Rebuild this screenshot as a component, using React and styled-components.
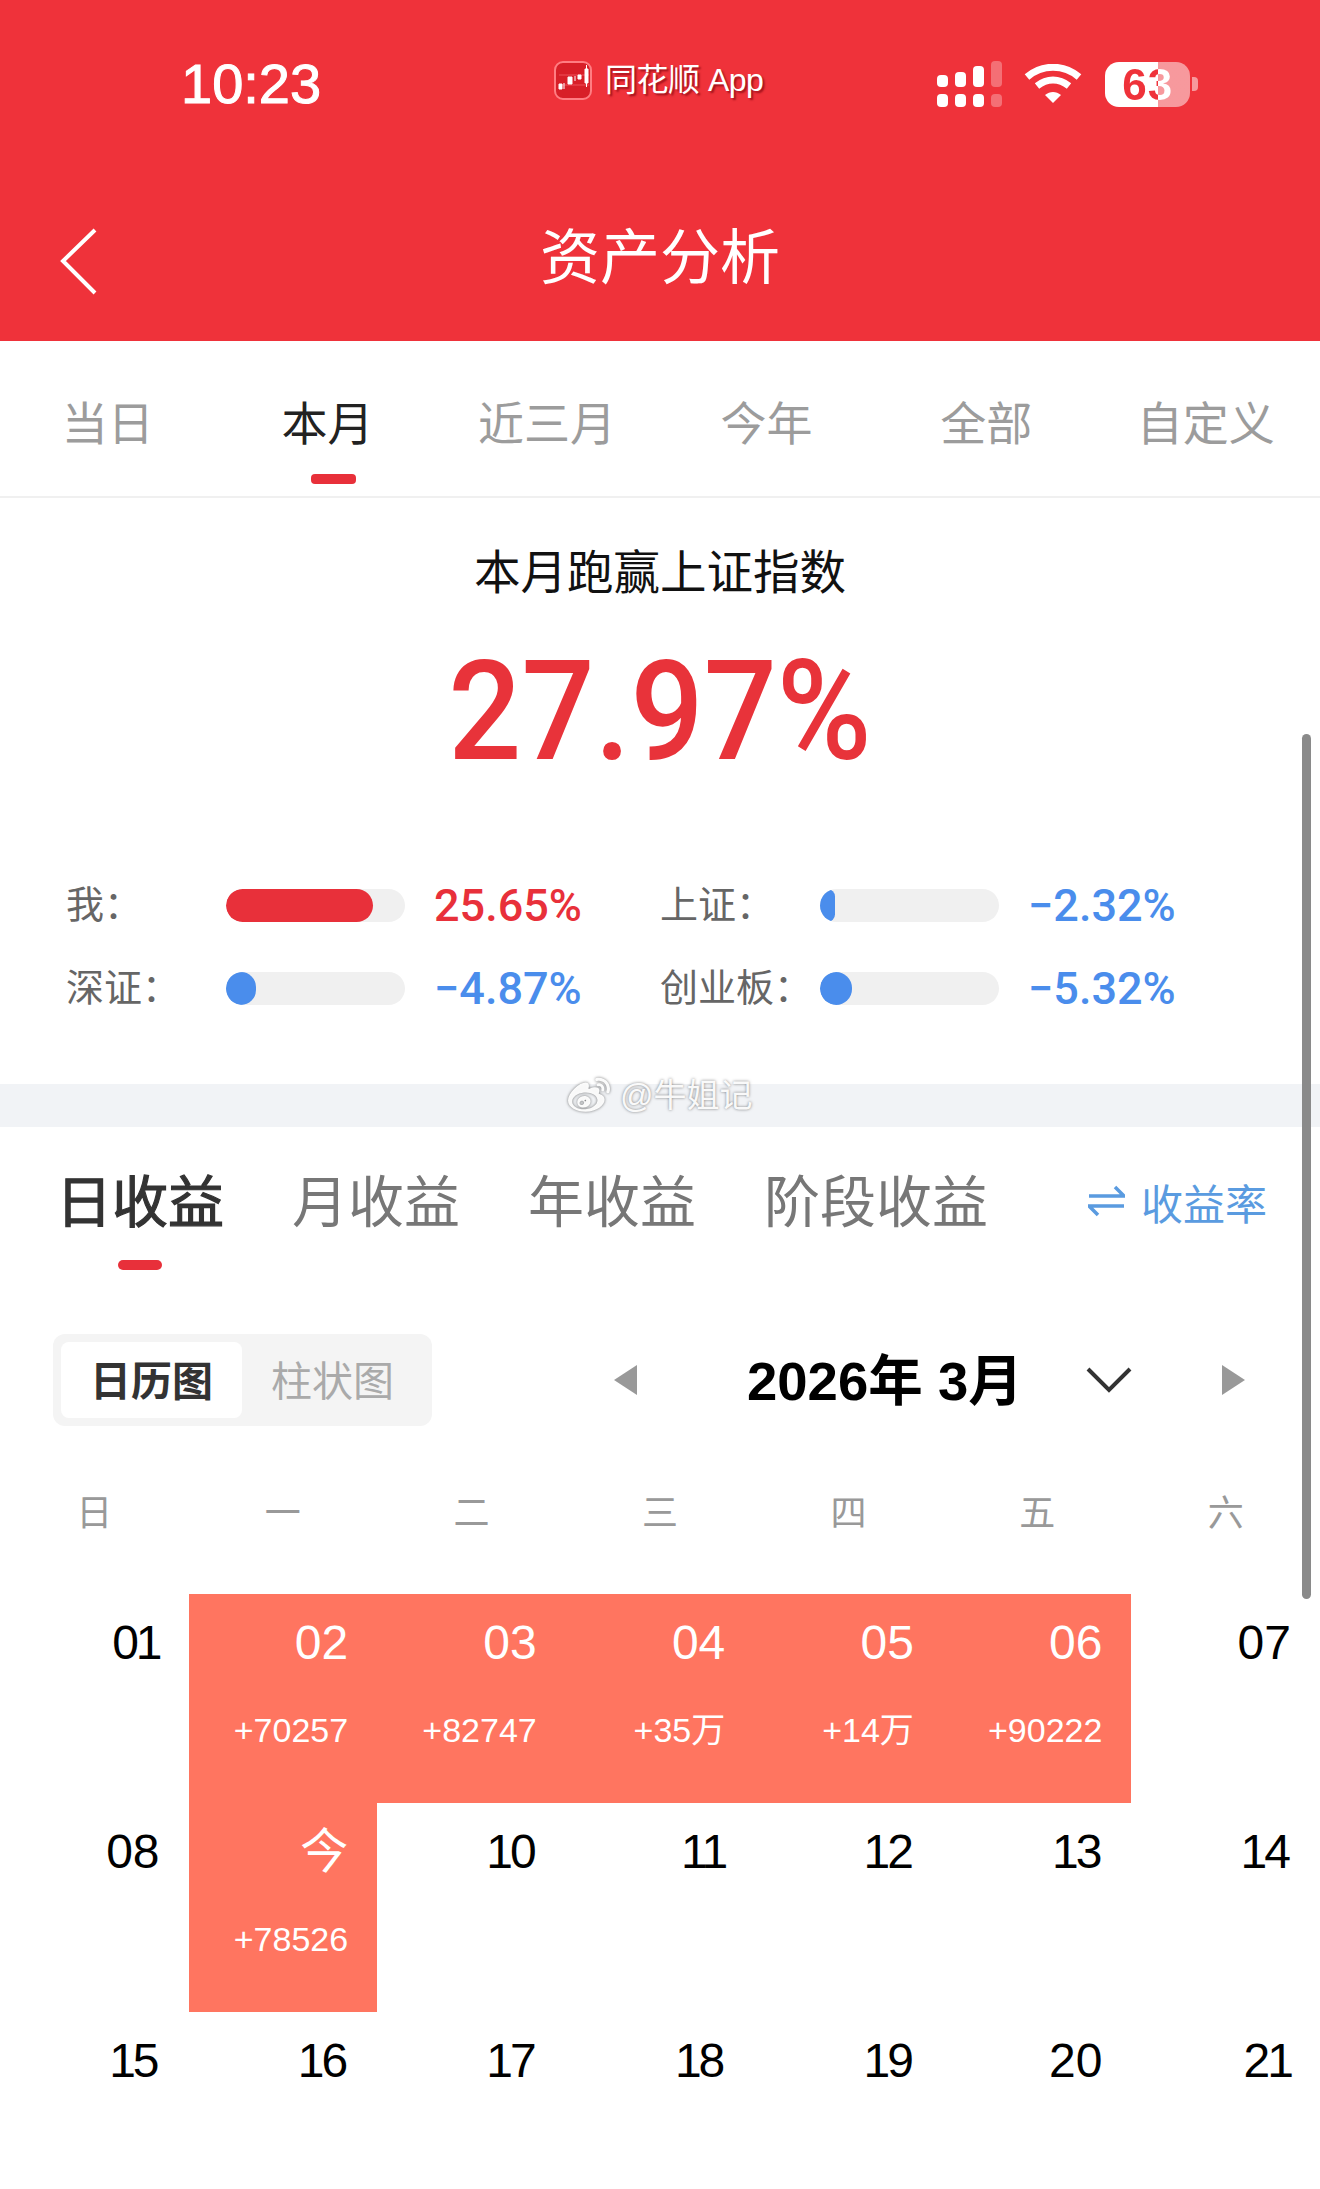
import React from 'react';
import styled, { createGlobalStyle } from 'styled-components';
import { FaWeibo } from 'react-icons/fa';

const FONT = '"Liberation Sans", "Noto Sans CJK SC", sans-serif';
const NUM_FONT = 'Roboto, "Liberation Sans", sans-serif';
const RED = '#ef323a';
const BLUE = '#4a8dec';

const GlobalStyle = createGlobalStyle`
  html, body {
    margin: 0;
    padding: 0;
    background: #fff;
    font-family: ${FONT};
  }
`;

const Page = styled.div`
  position: relative;
  width: 1320px;
  height: 2189px;
  overflow: hidden;
  background: #fff;
`;

const Header = styled.header`
  height: 341px;
  background: ${RED};
  color: #fff;
`;

const StatusBar = styled.div`
  display: flex;
  align-items: center;
  height: 168px;
  padding-left: 181px;
  box-sizing: border-box;
`;

const Clock = styled.div`
  width: 140px;
  margin-top: -2px;
  font-size: 56px;
  font-weight: 500;
  -webkit-text-stroke: 1px #fff;
  white-space: nowrap;
`;

const AppTag = styled.div`
  display: flex;
  align-items: center;
  gap: 13px;
  margin-left: 233px;
  margin-top: -8px;
  font-size: 32px;
  line-height: 40px;
  white-space: nowrap;
  text-shadow: 2px 2px 2px rgba(120, 0, 10, 0.65);
  letter-spacing: -0.5px;
`;

const StatusIcons = styled.div`
  display: flex;
  align-items: center;
  margin-left: 174px;
`;

const Battery = styled.div`
  position: relative;
  width: 85px;
  height: 45px;
  margin-left: 23px;
  border-radius: 14px;
  overflow: hidden;
  background: linear-gradient(90deg, #fff 62%, rgba(255, 255, 255, 0.5) 62%);
`;

const BatteryText = styled.span`
  display: block;
  width: 85px;
  text-align: center;
  font-size: 44px;
  letter-spacing: 1px;
  line-height: 45px;
  font-weight: 700;
  background: linear-gradient(90deg, ${RED} 62%, #fff 62%);
  -webkit-background-clip: text;
  background-clip: text;
  color: transparent;
`;

const BatteryNub = styled.div`
  width: 6px;
  height: 14px;
  margin-left: 2px;
  border-radius: 0 4px 4px 0;
  background: rgba(255, 255, 255, 0.5);
`;

const NavBar = styled.div`
  display: flex;
  justify-content: center;
  position: relative;
  padding-top: 61px;
`;

const BackIcon = styled.svg`
  position: absolute;
  left: 59px;
  top: 60px;
`;

const NavTitle = styled.h1`
  margin: 0;
  font-size: 60px;
  line-height: 60px;
  font-weight: 400;
`;

const RangeTabs = styled.nav`
  display: grid;
  grid-template-columns: repeat(6, 219.6px);
  height: 155px;
  margin-left: -2px;
  border-bottom: 2px solid #f0f0f0;
`;

const RangeTab = styled.div`
  display: flex;
  flex-direction: column;
  align-items: center;
  padding-top: 60px;
  font-size: 46px;
  line-height: 46px;
  color: ${({ $active }) => ($active ? '#222' : '#9c9c9c')};
`;

const RangeMark = styled.span`
  width: 45px;
  height: 10px;
  margin-top: 27px;
  margin-left: 12px;
  border-radius: 4px;
  background: #e8303a;
`;

const Summary = styled.section`
  height: 586px;
  display: flex;
  flex-direction: column;
`;

const SummaryTitle = styled.div`
  margin-top: 45px;
  text-align: center;
  font-size: 46.500px;
  line-height: 60px;
  color: #111;
`;

const BigNumber = styled.div`
  margin-top: 38px;
  text-align: center;
  font-family: ${NUM_FONT};
  font-size: 140px;
  line-height: 140px;
  font-weight: 500;
  color: #e8333a;
  transform: scaleX(0.92);
`;

const StatGrid = styled.div`
  display: grid;
  grid-template-columns: 594px 594px;
  row-gap: 33px;
  margin-top: 99px;
  padding-left: 66px;
`;

const Stat = styled.div`
  display: flex;
  align-items: center;
  height: 50px;
`;

const StatLabel = styled.span`
  width: 160px;
  margin-top: -8px;
  font-size: 38px;
  color: #666;
  white-space: nowrap;
`;

const Track = styled.div`
  width: 179px;
  height: 33px;
  border-radius: 17px;
  background: #f0f0f0;
  overflow: hidden;
`;

const Fill = styled.div`
  height: 100%;
  border-radius: 17px;
  background: ${({ $up }) => ($up ? '#e8303a' : BLUE)};
`;

const StatValue = styled.span`
  margin-left: 29px;
  font-family: ${NUM_FONT};
  font-size: 45px;
  font-weight: 500;
  white-space: nowrap;
  color: ${({ $up }) => ($up ? '#e8303a' : BLUE)};
`;

const Band = styled.div`
  height: 43px;
  background: #f1f3f6;
`;

const Watermark = styled.div`
  position: absolute;
  left: 564px;
  top: 1075px;
  display: flex;
  align-items: center;
  gap: 6px;
  font-size: 33px;
  line-height: 40px;
  color: rgba(255, 255, 255, 0.95);
  text-shadow: 0 0 3px rgba(0, 0, 0, 0.5);
`;

const WeiboMark = styled(FaWeibo)`
  width: 50px;
  height: 42px;
  filter: drop-shadow(0 0 1.5px rgba(0, 0, 0, 0.55));
`;

const ProfitTabs = styled.div`
  display: flex;
  height: 207px;
  padding: 46px 53px 0 56px;
  box-sizing: border-box;
`;

const ProfitTab = styled.div`
  display: flex;
  flex-direction: column;
  align-items: center;
  margin-right: 68px;
  font-size: 56px;
  line-height: 60px;
  color: ${({ $active }) => ($active ? '#333' : '#777')};
  -webkit-text-stroke: ${({ $active }) => ($active ? '1.2px #333' : '0')};
  white-space: nowrap;
`;

const ProfitMark = styled.span`
  width: 44px;
  height: 10px;
  margin-top: 27px;
  border-radius: 5px;
  background: #e8303a;
`;

const RateLink = styled.div`
  display: flex;
  align-items: center;
  gap: 16px;
  height: 60px;
  margin-left: auto;
  margin-top: -2px;
  font-size: 42px;
  color: #5a9be0;
  white-space: nowrap;
`;

const Toolbar = styled.div`
  display: flex;
  align-items: center;
  height: 92px;
  padding-left: 53px;
  margin-bottom: 58px;
`;

const Segmented = styled.div`
  display: flex;
  box-sizing: border-box;
  width: 379px;
  height: 92px;
  padding: 8px;
  border-radius: 12px;
  background: #f4f4f4;
`;

const Segment = styled.div`
  display: flex;
  align-items: center;
  justify-content: center;
  width: 181px;
  height: 76px;
  padding-bottom: 4px;
  box-sizing: border-box;
  border-radius: 8px;
  font-size: 41px;
  font-weight: ${({ $active }) => ($active ? 700 : 400)};
  color: ${({ $active }) => ($active ? '#333' : '#aaa')};
  background: ${({ $active }) => ($active ? '#fff' : 'transparent')};
`;

const Triangle = styled.div`
  width: 0;
  height: 0;
  border-top: 15px solid transparent;
  border-bottom: 15px solid transparent;
  ${({ $dir }) =>
    $dir === 'left'
      ? 'border-right: 23px solid #999; margin-left: 182px;'
      : 'border-left: 23px solid #999; margin-left: 90px;'}
`;

const MonthLabel = styled.div`
  width: 339px;
  margin-left: 110px;
  margin-top: -8px;
  font-size: 54.500px;
  font-weight: 700;
  color: #000;
  white-space: nowrap;
`;

const WeekRow = styled.div`
  display: grid;
  grid-template-columns: repeat(7, 1fr);
  height: 60px;
  margin-bottom: 50px;
`;

const WeekDay = styled.div`
  text-align: center;
  font-size: 36px;
  line-height: 60px;
  color: #999;
`;

const CalendarGrid = styled.div`
  display: grid;
  grid-template-columns: repeat(7, 1fr);
  grid-auto-rows: 209.2px;
`;

const DayCell = styled.div`
  box-sizing: border-box;
  padding: 19px 29px 0 0;
  text-align: right;
  background: ${({ $hit }) => ($hit ? '#ff7560' : 'transparent')};
  color: ${({ $hit }) => ($hit ? '#fff' : '#000')};
`;

const DayNum = styled.div`
  font-size: 48px;
  line-height: 60px;
`;

// the reference face has a proportional 1, Liberation's is tabular
const NarrowOne = styled.span`
  margin: 0 -3px;
`;

const DayProfit = styled.div`
  margin-top: 37px;
  font-size: 34px;
  line-height: 40px;
  white-space: nowrap;
`;

const ScrollThumb = styled.div`
  position: absolute;
  left: 1302px;
  top: 734px;
  width: 9px;
  height: 865px;
  border-radius: 5px;
  background: #8a8a8a;
`;

const tabs = ['当日', '本月', '近三月', '今年', '全部', '自定义'];

const stats = [
  { label: '我：', fill: 147, value: '25.65%', up: true },
  { label: '上证：', fill: 15, value: '−2.32%' },
  { label: '深证：', fill: 30, value: '−4.87%' },
  { label: '创业板：', fill: 32, value: '−5.32%' },
];

const profitTabs = ['日收益', '月收益', '年收益', '阶段收益'];
const weekDays = ['日', '一', '二', '三', '四', '五', '六'];

const days = [
  { n: '01' },
  { n: '02', p: '+70257' },
  { n: '03', p: '+82747' },
  { n: '04', p: '+35万' },
  { n: '05', p: '+14万' },
  { n: '06', p: '+90222' },
  { n: '07' },
  { n: '08' },
  { n: '今', p: '+78526' },
  { n: '10' },
  { n: '11' },
  { n: '12' },
  { n: '13' },
  { n: '14' },
  { n: '15' },
  { n: '16' },
  { n: '17' },
  { n: '18' },
  { n: '19' },
  { n: '20' },
  { n: '21' },
];

const AppIcon = () => (
  <svg width="38" height="39" viewBox="0 0 38 39">
    <rect x="1" y="1" width="36" height="37" rx="8" fill="#d81f28" stroke="#ff7d82" strokeWidth="2" />
    <path d="M5 24h30M5 14h30" stroke="#ee5158" strokeWidth="1" />
    <path
      d="M5 23h3v5H5zM10 22v6M14 16h4v7h-4zM21 15v5M24 14h3v4h-3zM31 8h3v14h-3zM32.500 4v22"
      fill="#fff"
      stroke="#fff"
      strokeWidth="1"
    />
  </svg>
);

const SignalIcon = () => (
  <svg width="66" height="46" viewBox="0 0 66 46" fill="#fff">
    <rect x="0" y="14" width="11" height="12" rx="4" />
    <rect x="18" y="11" width="11" height="15" rx="4" />
    <rect x="36" y="5" width="11" height="21" rx="4" />
    <rect x="54" y="0" width="11" height="26" rx="4" opacity="0.3" />
    <rect x="0" y="33" width="11" height="13" rx="4" />
    <rect x="18" y="33" width="11" height="13" rx="4" />
    <rect x="36" y="33" width="11" height="13" rx="4" />
    <rect x="54" y="33" width="11" height="13" rx="4" opacity="0.3" />
  </svg>
);

const WifiIcon = () => (
  <svg width="58" height="41" viewBox="0 0 58 41" fill="none" stroke="#fff" strokeWidth="7" style={{ marginLeft: 21 }}>
    <path d="M3 13C18 0 40 0 55 13" />
    <path d="M13 22c10-8 22-8 32 0" />
    <path d="M21 31l8 8 8-8c-5-4-11-4-16 0z" fill="#fff" stroke="none" />
  </svg>
);

const SwapIcon = () => (
  <svg width="37" height="34" viewBox="0 0 37 34" fill="none" stroke="#5a9be0" strokeWidth="3.500">
    <path d="M1 12h35L27 3" />
    <path d="M36 22H1l9 9" />
  </svg>
);

const renderDay = (n) =>
  [...n].map((ch, i) => (ch === '1' ? <NarrowOne key={i}>1</NarrowOne> : <span key={i}>{ch}</span>));

const App = () => (
  <Page>
    <GlobalStyle />
    <Header>
      <StatusBar>
        <Clock>10:23</Clock>
        <AppTag>
          <AppIcon />
          同花顺 App
        </AppTag>
        <StatusIcons>
          <SignalIcon />
          <WifiIcon />
          <Battery>
            <BatteryText>63</BatteryText>
          </Battery>
          <BatteryNub />
        </StatusIcons>
      </StatusBar>
      <NavBar>
        <BackIcon width="40" height="70" viewBox="0 0 40 70" fill="none" stroke="#fff" strokeWidth="4">
          <path d="M36 2L4 33l32 32" />
        </BackIcon>
        <NavTitle>资产分析</NavTitle>
      </NavBar>
    </Header>

    <RangeTabs>
      {tabs.map((t) => (
        <RangeTab key={t} $active={t === '本月'}>
          {t}
          {t === '本月' && <RangeMark />}
        </RangeTab>
      ))}
    </RangeTabs>

    <Summary>
      <SummaryTitle>本月跑赢上证指数</SummaryTitle>
      <BigNumber>27.97%</BigNumber>
      <StatGrid>
        {stats.map((s) => (
          <Stat key={s.label}>
            <StatLabel>{s.label}</StatLabel>
            <Track>
              <Fill $up={s.up} style={{ width: s.fill }} />
            </Track>
            <StatValue $up={s.up}>{s.value}</StatValue>
          </Stat>
        ))}
      </StatGrid>
    </Summary>

    <Band />
    <Watermark>
      <WeiboMark />
      @牛姐记
    </Watermark>

    <ProfitTabs>
      {profitTabs.map((t, i) => (
        <ProfitTab key={t} $active={i === 0}>
          {t}
          {i === 0 && <ProfitMark />}
        </ProfitTab>
      ))}
      <RateLink>
        <SwapIcon />
        收益率
      </RateLink>
    </ProfitTabs>

    <Toolbar>
      <Segmented>
        <Segment $active>日历图</Segment>
        <Segment>柱状图</Segment>
      </Segmented>
      <Triangle $dir="left" />
      <MonthLabel>2026年 3月</MonthLabel>
      <svg width="46" height="26" viewBox="0 0 46 26" fill="none" stroke="#333" strokeWidth="4">
        <path d="M2 2l21 21L44 2" />
      </svg>
      <Triangle $dir="right" />
    </Toolbar>

    <WeekRow>
      {weekDays.map((d) => (
        <WeekDay key={d}>{d}</WeekDay>
      ))}
    </WeekRow>

    <CalendarGrid>
      {days.map((d) => (
        <DayCell key={d.n} $hit={!!d.p}>
          <DayNum>{renderDay(d.n)}</DayNum>
          {d.p && <DayProfit>{d.p}</DayProfit>}
        </DayCell>
      ))}
    </CalendarGrid>

    <ScrollThumb />
  </Page>
);

export default App;
